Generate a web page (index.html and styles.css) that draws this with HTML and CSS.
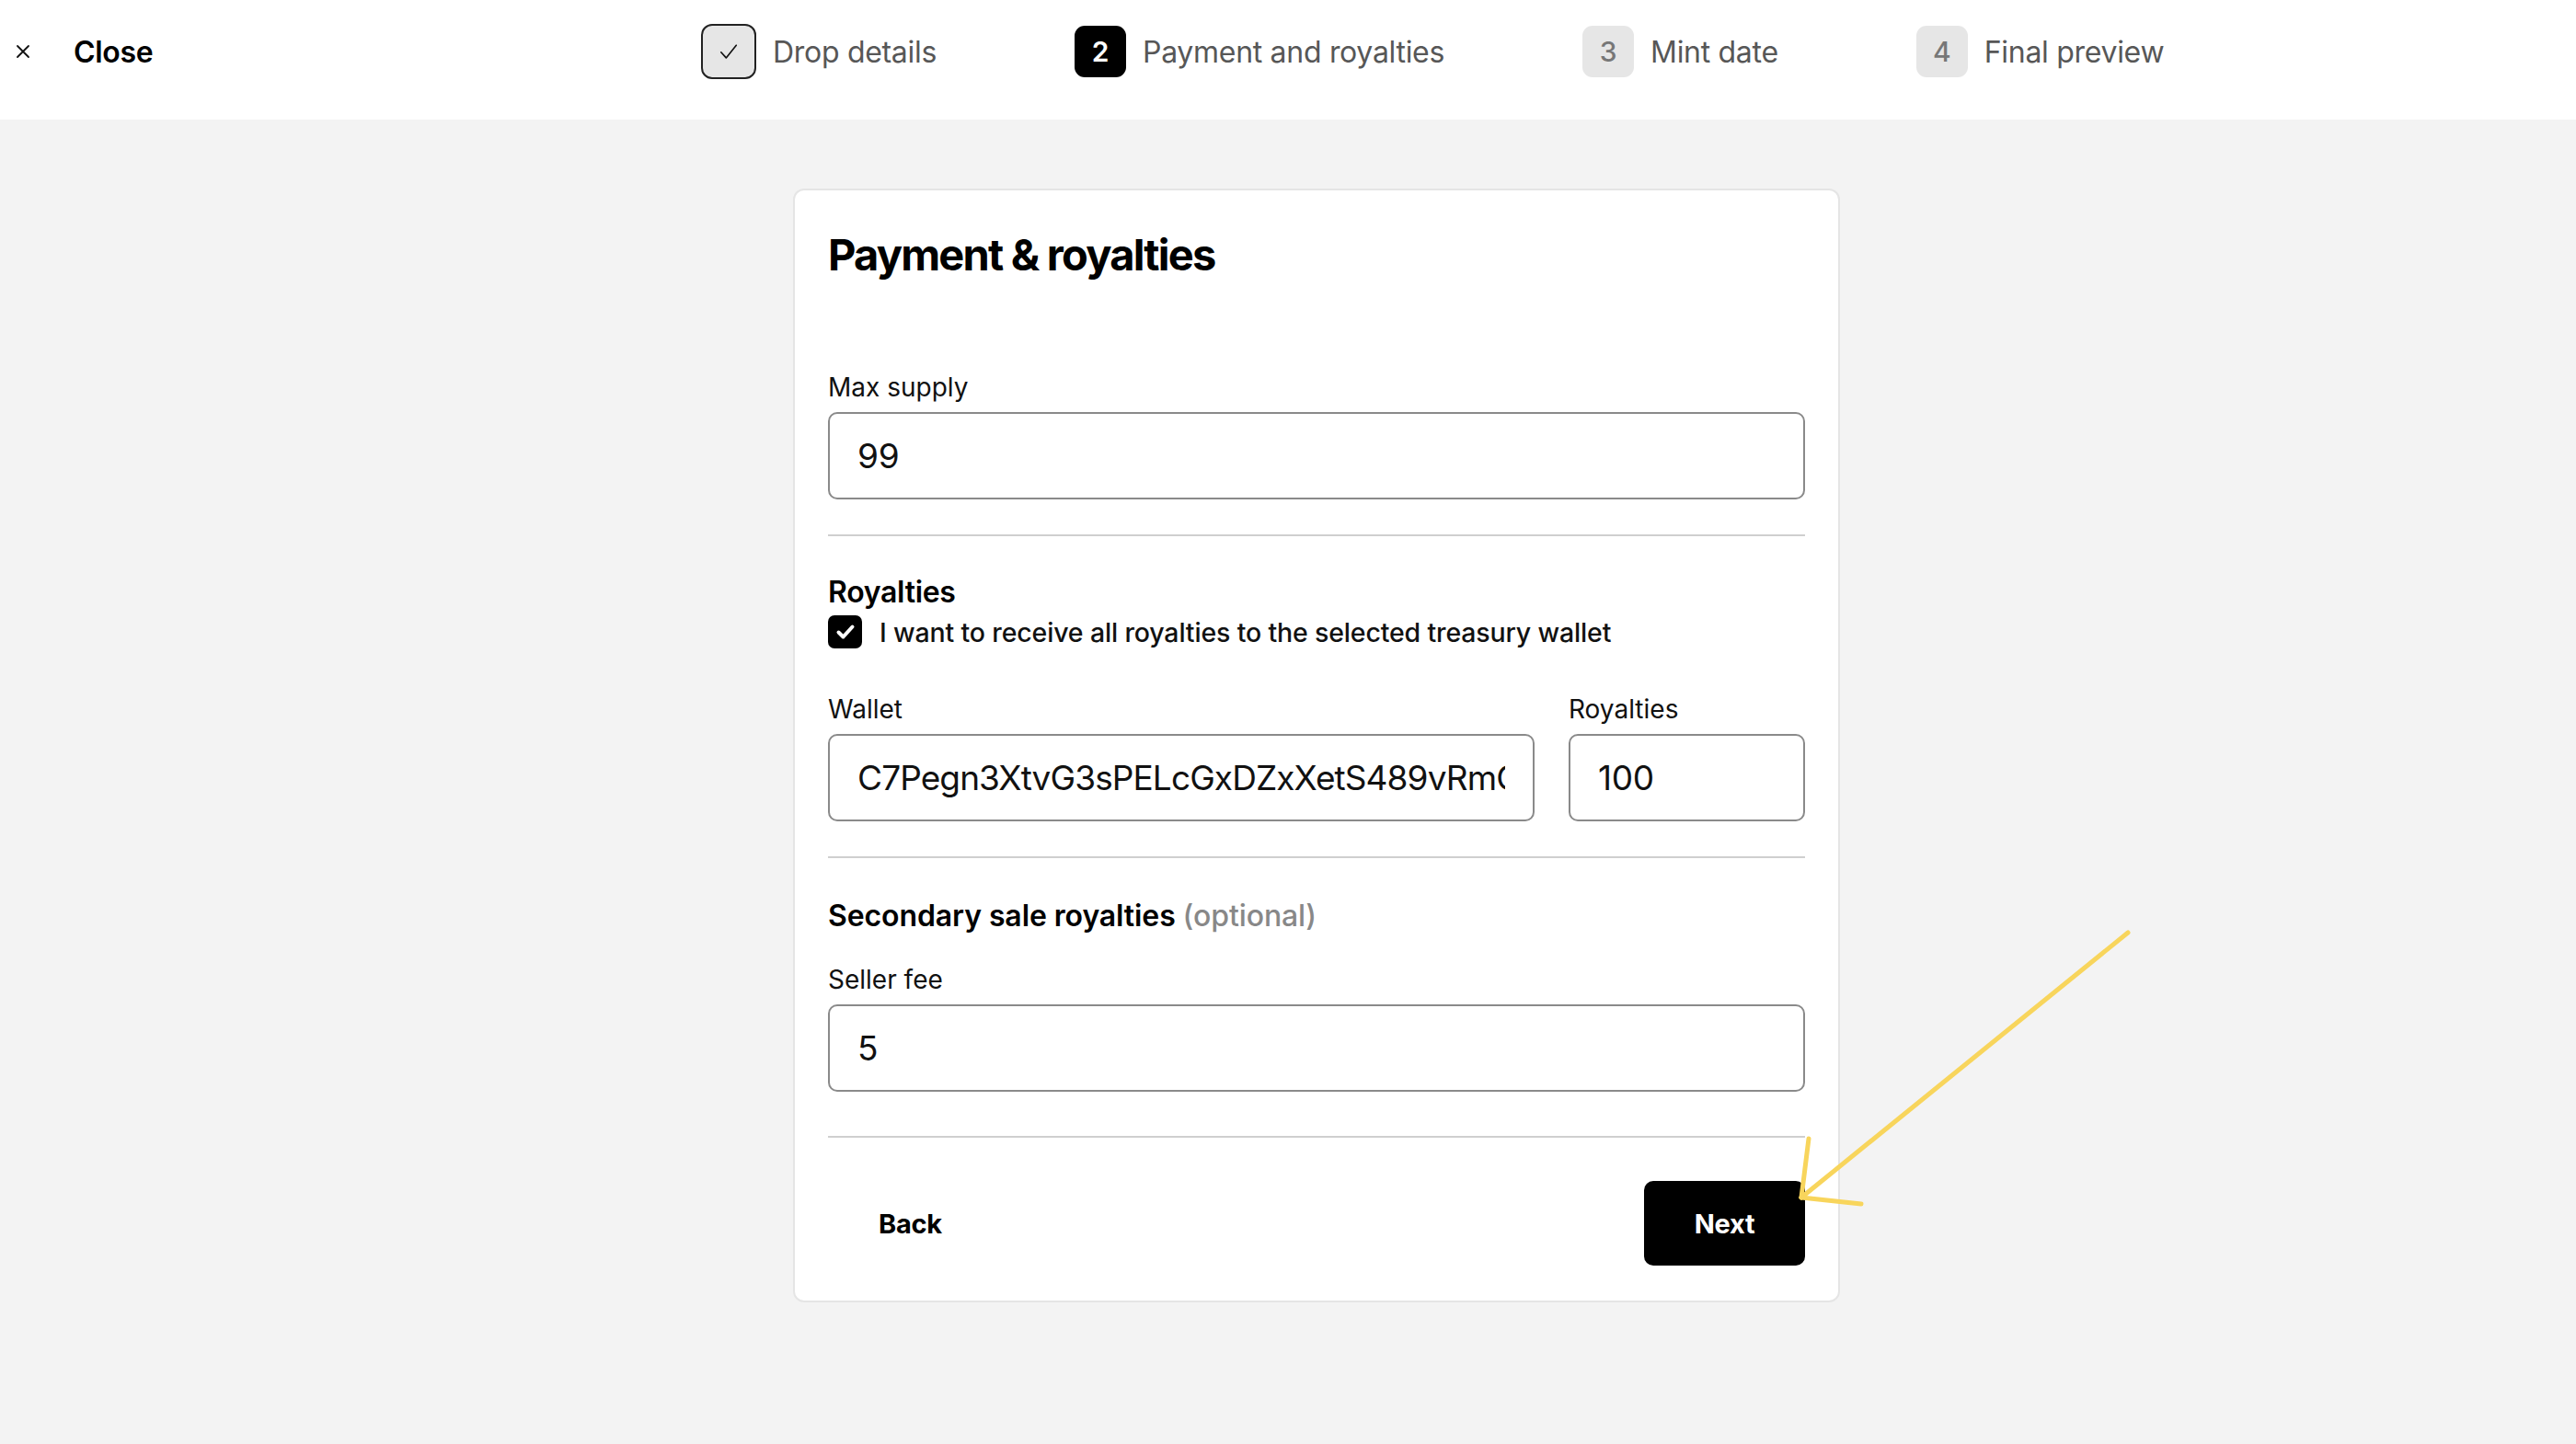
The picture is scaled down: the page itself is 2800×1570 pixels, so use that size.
FILE: index.html
```html
<!DOCTYPE html>
<html lang="en">
<head>
<meta charset="utf-8">
<title>Payment &amp; royalties</title>
<link rel="stylesheet" href="styles.css">
</head>
<body>
<header class="topbar">
  <div class="close-group">
    <svg class="close-icon" viewBox="0 0 16 16" width="16" height="16"><path d="M2 2L14 14M14 2L2 14" stroke="#111" stroke-width="1.8" stroke-linecap="round"/></svg>
    <span class="close-text">Close</span>
  </div>
  <nav class="steps">
    <div class="step">
      <span class="step-box done"><svg viewBox="0 0 24 24" width="36" height="36"><path d="M6.5 12.5L10.2 16.6L17.5 7.5" fill="none" stroke="#111" stroke-width="1.1" stroke-linecap="round" stroke-linejoin="round"/></svg></span>
      <span class="step-label">Drop details</span>
    </div>
    <div class="step">
      <span class="step-box active">2</span>
      <span class="step-label">Payment and royalties</span>
    </div>
    <div class="step">
      <span class="step-box todo">3</span>
      <span class="step-label">Mint date</span>
    </div>
    <div class="step">
      <span class="step-box todo">4</span>
      <span class="step-label">Final preview</span>
    </div>
  </nav>
</header>

<main class="page">
  <section class="card">
    <h1 class="title">Payment &amp; royalties</h1>

    <div class="field field-first">
      <label class="label">Max supply</label>
      <input class="input" type="text" value="99" readonly>
    </div>

    <hr class="divider">

    <h2 class="section-title">Royalties</h2>
    <div class="check-row">
      <span class="checkbox"><svg viewBox="0 0 36 36" width="36" height="36"><path d="M10.5 18.5L15.5 23.5L25.5 12.5" fill="none" stroke="#fff" stroke-width="4" stroke-linecap="round" stroke-linejoin="round"/></svg></span>
      <span class="check-text">I want to receive all royalties to the selected treasury wallet</span>
    </div>

    <div class="field-row">
      <div class="field field-wallet">
        <label class="label">Wallet</label>
        <input class="input input-wallet" type="text" value="C7Pegn3XtvG3sPELcGxDZxXetS489vRmCk2YdNq8Lw" readonly>
      </div>
      <div class="field field-royalty">
        <label class="label">Royalties</label>
        <input class="input" type="text" value="100" readonly>
      </div>
    </div>

    <hr class="divider">

    <h2 class="section-title second">Secondary sale royalties <span class="optional">(optional)</span></h2>

    <div class="field field-seller">
      <label class="label">Seller fee</label>
      <input class="input" type="text" value="5" readonly>
    </div>

    <hr class="divider divider-last">

    <div class="actions">
      <button class="btn-back" type="button">Back</button>
      <button class="btn-next" type="button">Next</button>
    </div>
  </section>
</main>

<svg class="annotation" viewBox="0 0 2800 1570" width="2800" height="1570">
  <g stroke="#f8d55c" stroke-width="5" stroke-linecap="round" fill="none">
    <path d="M2313 1014L1958 1302"/>
    <path d="M1958 1302L1966 1238"/>
    <path d="M1958 1302L2023 1309"/>
  </g>
</svg>
</body>
</html>
```

FILE: styles.css
```css
* {
  box-sizing: border-box;
}

html, body {
  margin: 0;
  padding: 0;
}

body {
  width: 2800px;
  height: 1570px;
  background: #f3f3f3;
  font-family: Inter, "Liberation Sans", sans-serif;
  color: #111;
  position: relative;
  overflow: hidden;
}

.topbar {
  height: 130px;
  background: #fff;
  display: grid;
  grid-template-columns: 745px auto;
  align-items: start;
  padding: 27px 0 0 17px;
}

.close-group {
  display: flex;
  align-items: center;
  height: 58px;
}

.close-icon {
  width: 16px;
  height: 16px;
}

.close-text {
  margin-left: 47px;
  font-size: 32px;
  font-weight: 600;
  letter-spacing: -0.3px;
  color: #000;
}

.steps {
  display: flex;
  gap: 150px;
}

.step {
  display: flex;
  align-items: center;
  gap: 18px;
  height: 58px;
}

.step-box {
  width: 56px;
  height: 56px;
  border-radius: 11px;
  display: flex;
  align-items: center;
  justify-content: center;
  font-size: 30px;
  font-weight: 600;
}

.step-box.done {
  width: 60px;
  height: 60px;
  background: #e6e6e6;
  border: 2px solid #222;
  border-radius: 12px;
}

.step-box.active {
  background: #000;
  color: #fff;
}

.step-box.todo {
  background: #e6e6e6;
  color: #777;
  font-weight: 500;
}

.step-label {
  font-size: 32px;
  letter-spacing: -0.3px;
  color: #575757;
}

.page {
  padding: 75px 0 0 862px;
}

.card {
  width: 1138px;
  height: 1211px;
  background: #fff;
  border: 2px solid #e5e5e5;
  border-radius: 12px;
  padding: 41px 36px 0 36px;
}

.title {
  margin: 0;
  font-size: 47px;
  line-height: 58px;
  font-weight: 700;
  letter-spacing: -1.8px;
  color: #000;
}

.field {
  display: flex;
  flex-direction: column;
}

.field-first {
  margin-top: 98px;
}

.label {
  font-size: 28px;
  line-height: 34px;
  color: #111;
  margin-bottom: 10px;
}

.input {
  width: 100%;
  height: 95px;
  border: 2px solid #8a8a8a;
  border-radius: 10px;
  padding: 0 30px;
  font-family: Inter, "Liberation Sans", sans-serif;
  font-size: 37px;
  letter-spacing: -0.3px;
  color: #111;
  background: #fff;
  outline: none;
}

.input-wallet {
  letter-spacing: -0.9px;
}

.divider {
  border: 0;
  height: 2px;
  background: #cfcfcf;
  margin: 38px 0 0 0;
}

.section-title {
  margin: 41px 0 0 0;
  font-size: 32px;
  line-height: 40px;
  font-weight: 600;
  letter-spacing: -0.3px;
  color: #000;
}

.section-title.second {
  margin-top: 43px;
  letter-spacing: -0.1px;
}

.optional {
  color: #888;
  font-weight: 500;
}

.check-row {
  display: flex;
  align-items: center;
  gap: 19px;
  margin-top: 5px;
}

.checkbox {
  width: 37px;
  height: 36px;
  border-radius: 7px;
  background: #000;
  display: flex;
  align-items: center;
  justify-content: center;
}

.check-text {
  font-size: 28.5px;
  font-weight: 500;
  letter-spacing: -0.15px;
  color: #111;
}

.field-row {
  display: flex;
  gap: 37px;
  margin-top: 49px;
}

.field-wallet {
  flex: 0 0 768px;
}

.field-royalty {
  flex: 1;
}

.field-seller {
  margin-top: 32px;
}

.divider-last {
  margin-top: 48px;
}

.actions {
  display: flex;
  justify-content: space-between;
  align-items: center;
  margin-top: 47px;
}

.btn-back {
  background: transparent;
  border: 0;
  padding: 0 0 0 55px;
  font-family: Inter, "Liberation Sans", sans-serif;
  font-size: 29px;
  font-weight: 700;
  letter-spacing: -0.3px;
  color: #000;
}

.btn-next {
  width: 175px;
  height: 92px;
  background: #000;
  border: 0;
  border-radius: 10px;
  font-family: Inter, "Liberation Sans", sans-serif;
  font-size: 29px;
  font-weight: 700;
  letter-spacing: -0.3px;
  color: #fff;
}

.annotation {
  position: absolute;
  top: 0;
  left: 0;
  pointer-events: none;
}
```
